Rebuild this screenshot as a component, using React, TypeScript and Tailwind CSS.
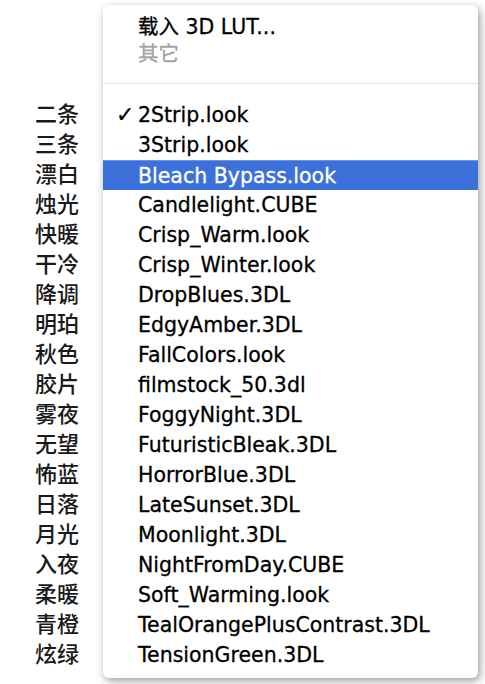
import React from "react";

const labels = ["二条","三条","漂白","烛光","快暖","干冷","降调","明珀","秋色","胶片","雾夜","无望","怖蓝","日落","月光","入夜","柔暖","青橙","炫绿"];
const items = ["2Strip.look","3Strip.look","Bleach Bypass.look","Candlelight.CUBE","Crisp_Warm.look","Crisp_Winter.look","DropBlues.3DL","EdgyAmber.3DL","FallColors.look","filmstock_50.3dl","FoggyNight.3DL","FuturisticBleak.3DL","HorrorBlue.3DL","LateSunset.3DL","Moonlight.3DL","NightFromDay.CUBE","Soft_Warming.look","TealOrangePlusContrast.3DL","TensionGreen.3DL"];

export default function App() {
  return (
    <div className="w-[485px] h-[684px] bg-white flex overflow-hidden">
      <div className="w-[103px] shrink-0 pt-[97px] pl-[35px] font-['Noto_Sans_CJK_SC',sans-serif] text-[22px] font-medium text-[#1a1a1a]">
        {labels.map((l) => (
          <div key={l} className="h-[30px] leading-[30px]">{l}</div>
        ))}
      </div>
      <div className="mt-[5px] w-[375px] h-[673px] bg-white rounded-[6px] shadow-[2px_3px_9px_rgba(0,0,0,0.4)] pt-[9px] font-['DejaVu_Sans','Noto_Sans_CJK_SC',sans-serif] text-[20.5px] text-black [-webkit-text-stroke:0.3px_currentColor]">
        <div className="h-[27px] leading-[27px] pl-[35px]">载入 3D LUT...</div>
        <div className="h-[27px] leading-[27px] pl-[35px] text-[#a3a3a3]">其它</div>
        <div className="mt-[15px] mb-[16px] h-px bg-[#e4e4e4]" />
        {items.map((it, i) => (
          <div
            key={it}
            className={
              i === 2
                ? "h-[30px] leading-[30px] flex bg-[#3c71db] border-t border-[#6b95e6] text-white"
                : "h-[30px] leading-[30px] flex"
            }
          >
            <span className="w-[35px] shrink-0 pl-[13px] text-[22px]">{i === 0 ? "✓" : ""}</span>
            <span>{it}</span>
          </div>
        ))}
      </div>
    </div>
  );
}
